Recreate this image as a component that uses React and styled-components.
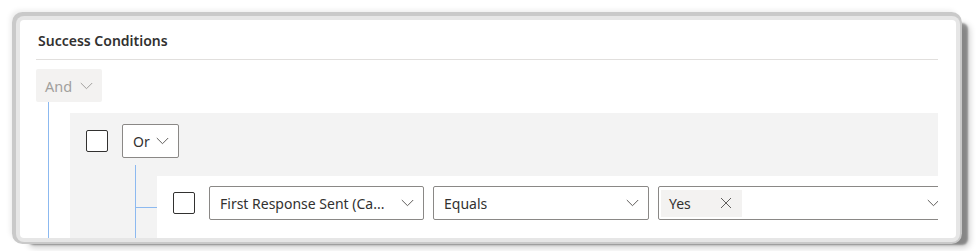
import React from "react";
import styled, { createGlobalStyle } from "styled-components";

const GlobalStyle = createGlobalStyle`
  html, body { margin: 0; padding: 0; background: #ffffff; }
  body { font-family: "Noto Sans", "Open Sans", Arial, sans-serif; color: #323130; }
  * { box-sizing: border-box; }
`;

const Page = styled.div`
  width: 980px;
  height: 251px;
  padding: 20px 0 0 20px;
  overflow: hidden;
`;

const Card = styled.div`
  width: 936px;
  height: 218px;
  background: #ffffff;
  border-radius: 4px;
  padding: 0 18px 0 16px;
  overflow: hidden;
  display: flex;
  flex-direction: column;
  box-shadow:
    0 0 0 4px #e6e6e6,
    -1px -1px 0 7px #c9c9c9,
    -4px -4px 5px 6px rgba(0, 0, 0, 0.07),
    10px 5px 2px 2px rgba(0, 0, 0, 0.36),
    11px 7px 6px 3px rgba(0, 0, 0, 0.18);
`;

const Title = styled.div`
  height: 40px;
  padding: 2px 0 0 2px;
  display: flex;
  align-items: center;
  font-size: 14px;
  font-weight: 600;
  color: #323130;
  border-bottom: 1px solid #e1dfdd;
  flex-shrink: 0;
`;

const Tree = styled.div`
  padding-top: 9px;
  overflow: hidden;
  flex: 1;
  min-height: 0;
`;

const Chevron = ({ color = "#605e5c" }) => (
  <svg width="13" height="8" viewBox="0 0 13 8" aria-hidden="true">
    <polyline points="0.8,1 6.5,6.7 12.2,1" fill="none" stroke={color} strokeWidth="1" />
  </svg>
);

const AndButton = styled.div`
  width: 66px;
  height: 33px;
  background: #f3f2f1;
  border-radius: 2px;
  display: flex;
  align-items: center;
  gap: 8px;
  padding-left: 9px;
  font-size: 14.5px;
  color: #a19f9d;
`;

const Branch = styled.div`
  margin-left: ${(p) => p.$indent}px;
  margin-top: ${(p) => p.$gap || 0}px;
  border-left: 1px solid #8cb9f0;
  padding-top: ${(p) => p.$top}px;
  padding-left: 21px;
`;

const GroupBlock = styled.div`
  background: #f3f3f3;
  padding-top: 11px;
  width: 868px;
  min-height: 200px;
`;

const Row = styled.div`
  display: flex;
  align-items: center;
  gap: 14px;
  padding-left: 16px;
`;

const Checkbox = styled.div`
  width: 22px;
  height: 22px;
  border: 1px solid #323130;
  border-radius: 2px;
  background: #ffffff;
  flex-shrink: 0;
`;

const Dropdown = styled.div`
  width: ${(p) => p.$w}px;
  height: 34px;
  background: #ffffff;
  border: 1px solid #8a8886;
  border-radius: 2px;
  display: flex;
  align-items: center;
  justify-content: space-between;
  padding: 0 9px 0 10px;
  font-size: 14px;
  color: #323130;
  white-space: nowrap;
  flex-shrink: 0;
`;

const DropText = styled.span`
  overflow: hidden;
  white-space: nowrap;
`;

const ItemLine = styled.div`
  display: flex;
  align-items: flex-start;
  margin-left: -21px;
`;

const Connector = styled.div`
  width: 21px;
  height: 1px;
  margin-top: 31px;
  background: #8cb9f0;
  flex-shrink: 0;
`;

const ConditionRow = styled.div`
  background: #ffffff;
  flex: 1;
  min-height: 80px;
  padding-top: 10px;
  display: flex;
  align-items: flex-start;
  gap: 9px;
  padding-left: 16px;
`;

const CheckCell = styled.div`
  height: 34px;
  display: flex;
  align-items: center;
  margin-right: 5px;
`;

const TagField = styled.div`
  width: 292px;
  height: 34px;
  border: 1px solid #8a8886;
  border-radius: 2px;
  display: flex;
  align-items: center;
  justify-content: space-between;
  padding: 0 9px 0 2px;
  flex-shrink: 0;
`;

const Tag = styled.div`
  width: 81px;
  height: 27px;
  background: #f3f2f1;
  display: flex;
  align-items: center;
  font-size: 14px;
  color: #323130;
`;

const TagText = styled.span`
  flex: 1;
  padding-left: 8px;
`;

const TagClose = styled.span`
  width: 32px;
  display: flex;
  justify-content: center;
  align-items: center;
`;

const CloseIcon = () => (
  <svg width="12" height="12" viewBox="0 0 12 12" aria-hidden="true">
    <path d="M1 1 L11 11 M11 1 L1 11" stroke="#605e5c" strokeWidth="1" fill="none" />
  </svg>
);

export default function App() {
  return (
    <>
      <GlobalStyle />
      <Page>
        <Card>
          <Title>Success Conditions</Title>
          <Tree>
            <AndButton>
              <span>And</span>
              <Chevron color="#a19f9d" />
            </AndButton>
            <Branch $indent={12} $top={11}>
              <GroupBlock>
                <Row>
                  <Checkbox />
                  <Dropdown $w={57}>
                    <span>Or</span>
                    <Chevron />
                  </Dropdown>
                </Row>
                <Branch $indent={65} $top={11} $gap={7}>
                  <ItemLine>
                    <Connector />
                    <ConditionRow>
                      <CheckCell>
                        <Checkbox />
                      </CheckCell>
                      <Dropdown $w={215}>
                        <DropText>First Response Sent (Ca...</DropText>
                        <Chevron />
                      </Dropdown>
                      <Dropdown $w={216}>
                        <DropText>Equals</DropText>
                        <Chevron />
                      </Dropdown>
                      <TagField>
                        <Tag>
                          <TagText>Yes</TagText>
                          <TagClose>
                            <CloseIcon />
                          </TagClose>
                        </Tag>
                        <Chevron />
                      </TagField>
                    </ConditionRow>
                  </ItemLine>
                </Branch>
              </GroupBlock>
            </Branch>
          </Tree>
        </Card>
      </Page>
    </>
  );
}
